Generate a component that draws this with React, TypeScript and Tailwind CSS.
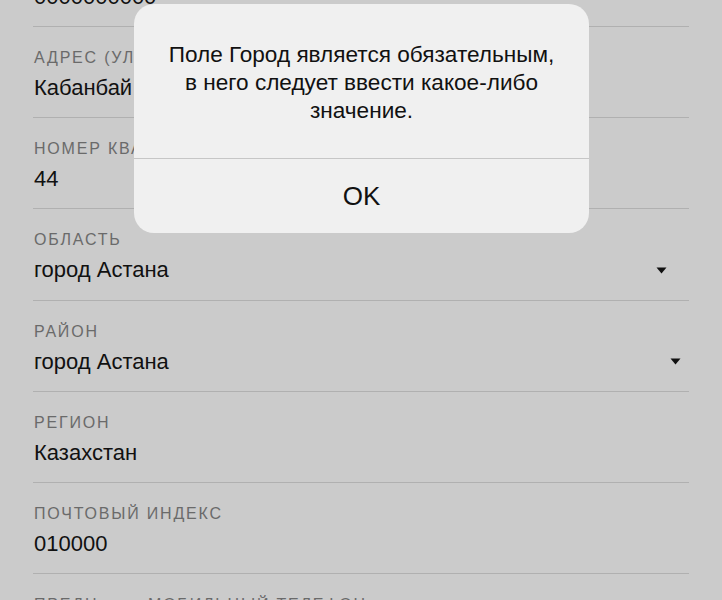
import React from "react";

type Row = { label: string; value: string; arrowMr?: number };

const rows: Row[] = [
  { label: "МОБИЛЬНЫЙ ТЕЛЕФОН", value: "0000000000" },
  { label: "АДРЕС (УЛИЦА, ДОМ)", value: "Кабанбай батыра 11" },
  { label: "НОМЕР КВАРТИРЫ", value: "44" },
  { label: "ОБЛАСТЬ", value: "город Астана", arrowMr: 22 },
  { label: "РАЙОН", value: "город Астана", arrowMr: 8 },
  { label: "РЕГИОН", value: "Казахстан" },
  { label: "ПОЧТОВЫЙ ИНДЕКС", value: "010000" },
];

function Arrow({ mr }: { mr: number }) {
  return (
    <svg width="11" height="7" viewBox="0 0 11 7" style={{ marginRight: mr }} className="shrink-0">
      <path d="M0.5 0.5 L10.5 0.5 L5.5 6.5 Z" fill="#111" />
    </svg>
  );
}

export default function App() {
  return (
    <div
      className="relative w-[722px] h-[600px] overflow-hidden bg-[#cbcbcb]"
      style={{ fontFamily: '"Liberation Sans", Arial, sans-serif' }}
    >
      <div className="ml-[33px] w-[656px] -mt-[64px] flex flex-col">
        {rows.map((r, i) => (
          <div key={i} className="h-[91.17px] flex flex-col border-b border-[#b0b0b0]">
            <div className="mt-[21px] h-[20px] leading-[20px] text-[16px] tracking-[1.8px] text-[#6a6a6a] pl-[1px] whitespace-nowrap">
              {r.label}
            </div>
            <div className="mt-[6px] h-[28px] flex items-center justify-between pl-[1px]">
              <span className="text-[22px] leading-[28px] text-[#111] whitespace-nowrap">{r.value}</span>
              {r.arrowMr !== undefined && <Arrow mr={r.arrowMr} />}
            </div>
          </div>
        ))}
        <div className="h-[91px] flex flex-col">
          <div className="mt-[21px] h-[20px] leading-[20px] text-[16px] tracking-[1.8px] text-[#6a6a6a] pl-[1px] whitespace-nowrap flex">
            <span className="w-[114px]">ПРЕДН.</span>
            <span>МОБИЛЬНЫЙ ТЕЛЕФОН</span>
          </div>
        </div>
      </div>

      <div className="absolute left-[134px] top-[4px] w-[455px] h-[229px] rounded-[20px] bg-[#f0f0f0] flex flex-col">
        <div className="h-[154px] pt-[37px] text-center text-[22.6px] leading-[28px] text-[#111] whitespace-nowrap">
          Поле Город является обязательным,
          <br />
          в него следует ввести какое-либо
          <br />
          значение.
        </div>
        <div className="h-px bg-[#c6c6c6]" />
        <div className="flex-1 flex items-center justify-center text-[26px] text-[#111]">OK</div>
      </div>
    </div>
  );
}
